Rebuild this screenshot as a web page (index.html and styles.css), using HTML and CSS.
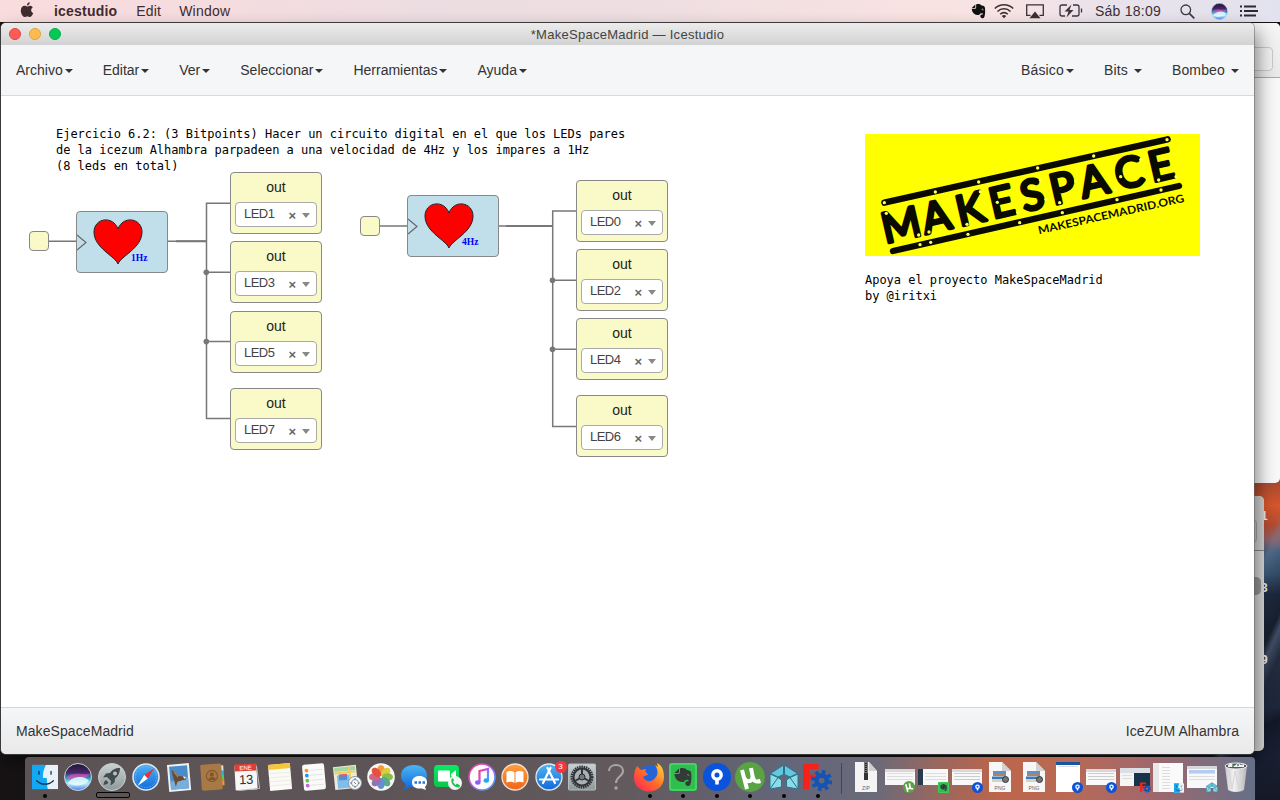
FILE: index.html
```html
<!DOCTYPE html>
<html lang="es">
<head>
<meta charset="utf-8">
<title>Icestudio</title>
<link rel="stylesheet" href="styles.css">
</head>
<body>
<svg class="defs" width="0" height="0" aria-hidden="true">
  <defs>
    <linearGradient id="gSky" x1="0" y1="0" x2="0" y2="1"><stop offset="0" stop-color="#4db5f5"/><stop offset="1" stop-color="#1269d8"/></linearGradient>
    <linearGradient id="gSilver" x1="0" y1="0" x2="0" y2="1"><stop offset="0" stop-color="#c9d2d3"/><stop offset="1" stop-color="#8e999a"/></linearGradient>
    <linearGradient id="gSiri" x1="0" y1="0" x2="0" y2="1"><stop offset="0" stop-color="#1b1638"/><stop offset=".35" stop-color="#4a2768"/><stop offset=".55" stop-color="#27a5c9"/><stop offset=".75" stop-color="#b9effc"/><stop offset="1" stop-color="#4a7af0"/></linearGradient>
    <linearGradient id="gGreen" x1="0" y1="0" x2="0" y2="1"><stop offset="0" stop-color="#0bea63"/><stop offset="1" stop-color="#0ac74b"/></linearGradient>
    <linearGradient id="gOrange" x1="0" y1="0" x2="0" y2="1"><stop offset="0" stop-color="#ffa03a"/><stop offset="1" stop-color="#f0641c"/></linearGradient>
    <linearGradient id="gNote" x1="0" y1="0" x2="1" y2="1"><stop offset="0" stop-color="#ff3a7a"/><stop offset=".5" stop-color="#b05cf0"/><stop offset="1" stop-color="#2bb8f5"/></linearGradient>
    <linearGradient id="gFox" x1="0" y1="1" x2="1" y2="0"><stop offset="0" stop-color="#ff1f60"/><stop offset=".5" stop-color="#ff6a28"/><stop offset="1" stop-color="#ffe03a"/></linearGradient>
    <linearGradient id="gBin" x1="0" y1="0" x2="1" y2="0"><stop offset="0" stop-color="#c9c9c9"/><stop offset=".4" stop-color="#f3f3f3"/><stop offset="1" stop-color="#b5b5b8"/></linearGradient>
    <symbol id="source" viewBox="0 0 28 28"><circle cx="14" cy="14" r="14" fill="#0a53dc"/><circle cx="14" cy="12" r="4.200" fill="none" stroke="#fff" stroke-width="3.400"/><path d="M14 15.500v6" stroke="#fff" stroke-width="3.600"/></symbol>
    <symbol id="torrent" viewBox="0 0 30 30"><circle cx="15" cy="15" r="15" fill="#5aa343"/><path d="M7 8l5 19M8.500 14c2 7 9 7 9 0L16 6M17.500 14c1 5 3 6.500 8 5" fill="none" stroke="#fff" stroke-width="4"/></symbol>
    <symbol id="evernote" viewBox="0 0 28 28"><rect width="28" height="28" rx="2" fill="#2fbf4f"/><rect x="1" y="1" width="26" height="26" rx="2" fill="none" stroke="#5fe07a"/><path d="M10 5.500L5.500 10H9a1 1 0 0 0 1-1z" fill="#333b36"/><path d="M11 5.500c3-1 6 0 7 1.500 3 .5 4 1 4.200 3 .4 4 .3 8-.7 11-1 3-5 2.500-5.200-.5 0-2 1.500-2.500 3-2l.2-1.500c-3-.8-4 .5-4.500 2-3 0-6-.3-7.500-2.500C6 14.500 5.500 12.500 5.500 11H9c1.500 0 2-.8 2-2z" fill="#333b36"/><path d="M18 12c1-.8 2-.3 2 .8" stroke="#2fbf4f" fill="none"/></symbol>
    <symbol id="ice" viewBox="0 0 30 26"><path d="M1 10l8 3.500 3.500 2.500V23L1 25zM29 10l-8 3.500-3.500 2.500V23L29 25z" fill="#8bdbe9" stroke="#28748b"/><path d="M14.500 1v9.500L9 13 1.500 9.500zM15.500 1v9.500l5.500 2.500 7.500-3.500z" fill="#63c8dd" stroke="#28748b"/><path d="M1 25l8-11.500M29 25l-8-11.500" stroke="#28748b" fill="none"/></symbol>
    <symbol id="freecad" viewBox="0 0 28 28"><path d="M0 1h15v5H6v5h6v5H6v9H0z" fill="#f5221b"/><circle cx="18" cy="17" r="8" fill="none" stroke="#1553b5" stroke-width="4.500" stroke-dasharray="3.200 3.080"/><circle cx="18" cy="17" r="5" fill="none" stroke="#1553b5" stroke-width="4.500"/></symbol>
    <symbol id="finder" viewBox="0 0 28 28"><path d="M0 1h28v26H0z" fill="#e9f1f8"/><path d="M0 1h15c-3 6-3.500 11-3 14h4c0 4 0 8 1 12H0z" fill="#13a8f3"/><path d="M7.500 8v3M20.500 8v3M5 18c5 5 13 5 18 0" stroke="#17304a" stroke-width="1.400" fill="none" stroke-linecap="round"/></symbol>
    <symbol id="siri" viewBox="0 0 28 28"><circle cx="14" cy="14" r="13.500" fill="url(#gSiri)" stroke="#d0d0d8"/><path d="M2 15c7-7 14-3 24-4-4 6-16 8-24 4z" fill="#f04fc0" opacity=".6"/><path d="M4 20c4-7 17-8 21-2-6 5-15 6-21 2z" fill="#e6fcff" opacity=".85"/></symbol>
    <symbol id="png" viewBox="0 0 24 30"><path d="M1 0h13l9 9v21H1z" fill="#f7f7f7"/><path d="M14 0v9h9z" fill="#d2d2d2"/><path d="M5 9h13v5H5z" fill="#5b93cd"/><path d="M5 11.500h13V14H5z" fill="#b0835a"/><path d="M4 14.500h14V20H4z" fill="#3d78b8"/><path d="M4 17h14v3H4z" fill="#d8d2c4"/><circle cx="17.500" cy="17.500" r="3" fill="#777" stroke="#333"/><text x="12" y="28" class="file-kind">PNG</text></symbol>
  </defs>
</svg>

<div class="desktop">
  <div class="wallpaper">
    <span class="shot-label shot-a">1</span><span class="shot-label shot-b">3</span><span class="shot-label shot-c">9</span>
  </div>

  <header class="menubar">
    <div class="menubar-left">
      <svg class="apple" width="14" height="16" viewBox="0 0 14 16"><path d="M9.800.2c.1 1.700-1.300 3.300-2.900 3.300C6.700 1.900 8.200.3 9.800.2zM7 4.500c.7 0 1.700-.8 3-.8 1.200 0 2.200.6 2.800 1.500-2.400 1.500-2 4.900.5 5.900-.5 1.500-1.900 4-3.300 4-1 0-1.500-.6-2.700-.6s-1.700.6-2.600.6C2.900 15.200.8 11.800.8 8.600c0-3.100 1.900-4.800 3.700-4.800 1.100 0 1.900.7 2.500.7z" fill="#402c2f"/></svg>
      <strong class="m-app">icestudio</strong><span class="m-edit">Edit</span><span class="m-window">Window</span>
    </div>
    <div class="menubar-right">
      <svg width="15" height="17" viewBox="4.500 4.500 19 20"><path d="M10 5.500L5.500 10H9a1 1 0 0 0 1-1z" fill="#111"/><path d="M11 5.500c3-1 6 0 7 1.500 3 .5 4 1 4.200 3 .4 4 .3 8-.7 11-1 3-5 2.500-5.200-.5 0-2 1.500-2.500 3-2l.2-1.500c-3-.8-4 .5-4.500 2-3 0-6-.3-7.500-2.500C6 14.500 5.500 12.500 5.500 11H9c1.500 0 2-.8 2-2z" fill="#111"/><path d="M18 12c1-.8 2-.3 2 .8" stroke="#eee" fill="none"/></svg>
      <svg width="20" height="16" viewBox="0 0 20 16"><g fill="none" stroke="#3d2f33" stroke-width="1.600"><path d="M.8 5.500c5-5 13.400-5 18.400 0M3.500 8.500c3.600-3.600 9.400-3.600 13 0M6.200 11.300c2.200-2.200 5.400-2.200 7.600 0"/></g><path d="M7.800 13c1.300-1.300 3.100-1.300 4.400 0L10 15.300z" fill="#3d2f33"/></svg>
      <svg width="18" height="15" viewBox="0 0 18 15"><path d="M4.500 11.300H.7V.8h16.600v10.500h-3.800" fill="none" stroke="#3d2f33" stroke-width="1.300"/><path d="M9 7.500l5.500 6.800h-11z" fill="#3d2f33"/></svg>
      <svg width="24" height="14" viewBox="0 0 24 14"><path d="M8 1H3a2 2 0 0 0-2 2v7a2 2 0 0 0 2 2h3M14 1h4a2 2 0 0 1 2 2v7a2 2 0 0 1-2 2h-5M22.500 4.500v4" fill="none" stroke="#3d3338" stroke-width="1.300"/><path d="M12.500.5L5.500 7.500h4l-2 6 7-7.500h-4z" fill="#3d3338"/></svg>
      <span class="clock">Sáb 18:09</span>
      <svg width="15" height="15" viewBox="0 0 15 15"><circle cx="5.800" cy="5.800" r="4.800" fill="none" stroke="#3c383f" stroke-width="1.300"/><path d="M9.300 9.300l5 5" stroke="#3c383f" stroke-width="1.700"/></svg>
      <svg width="17" height="17"><use href="#siri"/></svg>
      <svg width="18" height="12" viewBox="0 0 18 12"><path d="M0 1.500h2M0 6h2M0 10.500h2M4 1.500h12M4 6h14M4 10.500h12" stroke="#2b2a33" stroke-width="1.800"/></svg>
    </div>
  </header>

  <div class="back-window back-one"><div class="back-toolbar"><div class="back-field"></div></div></div>
  <div class="back-window back-two"><div class="back-toolbar"><div class="back-field"></div></div><div class="back-thumb"></div></div>

  <main class="window">
    <div class="titlebar">
      <div class="lights"><i class="light close"></i><i class="light mini"></i><i class="light zoom"></i></div>
      <span class="window-title">*MakeSpaceMadrid — Icestudio</span>
    </div>
    <nav class="nav">
      <div class="nav-group"><a>Archivo<i class="caret"></i></a><a>Editar<i class="caret"></i></a><a>Ver<i class="caret"></i></a><a>Seleccionar<i class="caret"></i></a><a>Herramientas<i class="caret"></i></a><a>Ayuda<i class="caret"></i></a></div>
      <div class="nav-group nav-right"><a>Básico<i class="caret"></i></a><a>Bits&nbsp;<i class="caret"></i></a><a>Bombeo&nbsp;<i class="caret"></i></a></div>
    </nav>

    <section class="canvas">
      <svg class="wires" width="1253" height="611" viewBox="1 96 1253 611">
        <g fill="none" stroke="#777" stroke-width="1.500">
          <path d="M49 241.200h27M168 241.200h38M380 226h27M499 226h53.500"/>
          <path d="M230 203.200h-23.500v215.300H230M206 272.300h24M206 341.600h24"/>
          <path d="M576 211h-23.300v215.500H576M552.500 280.200h23.500M552.500 349.300h23.500"/>
          <path d="M176 241.200h30M506 226h46.500" stroke-width="2"/>
        </g>
        <g fill="#777"><circle cx="206.300" cy="272.300" r="2.800"/><circle cx="206.300" cy="341.600" r="2.800"/><circle cx="552.500" cy="280.200" r="2.800"/><circle cx="552.500" cy="349.300" r="2.800"/></g>
      </svg>

      <pre class="note note-task">Ejercicio 6.2: (3 Bitpoints) Hacer un circuito digital en el que los LEDs pares
de la icezum Alhambra parpadeen a una velocidad de 4Hz y los impares a 1Hz
(8 leds en total)</pre>

      <div class="pin pin-1"></div>
      <div class="pin pin-2"></div>
      <div class="code code-1">
        <svg width="90" height="60" viewBox="0 0 90 60"><path d="M0 23l9 7.500L0 38" fill="none" stroke="#666" stroke-width="1.200"/><path d="M41 52C38 44 17 36 17 20 17 6 36 3 41 17 46 3 65 6 65 20 65 36 44 44 41 52z" fill="#f00" stroke="#222"/><text x="54" y="49" class="hz">1Hz</text></svg>
      </div>
      <div class="code code-2">
        <svg width="90" height="60" viewBox="0 0 90 60"><path d="M0 23l9 7.500L0 38" fill="none" stroke="#666" stroke-width="1.200"/><path d="M41 52C38 44 17 36 17 20 17 6 36 3 41 17 46 3 65 6 65 20 65 36 44 44 41 52z" fill="#f00" stroke="#222"/><text x="54" y="49" class="hz">4Hz</text></svg>
      </div>

      <div class="out col-a r1"><span>out</span><div class="select"><b>LED1</b><em>×</em><i></i></div></div>
      <div class="out col-a r2"><span>out</span><div class="select"><b>LED3</b><em>×</em><i></i></div></div>
      <div class="out col-a r3"><span>out</span><div class="select"><b>LED5</b><em>×</em><i></i></div></div>
      <div class="out col-a r4"><span>out</span><div class="select"><b>LED7</b><em>×</em><i></i></div></div>
      <div class="out col-b s1"><span>out</span><div class="select"><b>LED0</b><em>×</em><i></i></div></div>
      <div class="out col-b s2"><span>out</span><div class="select"><b>LED2</b><em>×</em><i></i></div></div>
      <div class="out col-b s3"><span>out</span><div class="select"><b>LED4</b><em>×</em><i></i></div></div>
      <div class="out col-b s4"><span>out</span><div class="select"><b>LED6</b><em>×</em><i></i></div></div>

      <div class="sponsor">
        <svg width="335" height="122" viewBox="30 27 1005 366">
          <rect x="30" y="27" width="1005" height="366" fill="#ff0"/>
          <path d="M88 233L938 43M114 378L972 183" stroke="#0a0a00" stroke-width="19" stroke-linecap="round"/>
          <text class="logo-main" transform="translate(106 352) rotate(-12.900)" x="-16 108 214 316 412 502 594 702 806">MAKESPACE</text>
          <text class="logo-url" transform="translate(552 328) rotate(-12.600)" textLength="448" lengthAdjust="spacingAndGlyphs">MAKESPACEMADRID.ORG</text>
          <g fill="#ffff50"><circle cx="88" cy="233" r="5"/><circle cx="241" cy="201" r="5"/><circle cx="371" cy="171" r="5"/><circle cx="548" cy="129" r="5"/><circle cx="716" cy="93" r="5"/><circle cx="936" cy="44" r="5"/><circle cx="195" cy="359" r="5"/><circle cx="227" cy="352" r="5"/><circle cx="339" cy="328" r="5"/><circle cx="494" cy="293" r="5"/><circle cx="622" cy="263" r="5"/><circle cx="786" cy="224" r="5"/><circle cx="918" cy="195" r="5"/><circle cx="94" cy="265" r="5"/><circle cx="191" cy="330" r="5"/><circle cx="222" cy="321" r="5"/><circle cx="336" cy="298" r="5"/><circle cx="376" cy="200" r="5"/><circle cx="427" cy="232" r="5"/><circle cx="488" cy="262" r="5"/><circle cx="556" cy="165" r="5"/><circle cx="573" cy="223" r="5"/><circle cx="614" cy="233" r="5"/><circle cx="662" cy="168" r="5"/><circle cx="780" cy="195" r="5"/><circle cx="797" cy="155" r="5"/><circle cx="858" cy="103" r="5"/><circle cx="911" cy="165" r="5"/><circle cx="963" cy="155" r="5"/></g>
        </svg>
        <pre class="note">Apoya el proyecto MakeSpaceMadrid
by @iritxi</pre>
      </div>
    </section>

    <footer class="status"><span>MakeSpaceMadrid</span><span>IceZUM Alhambra</span></footer>
  </main>

  <div class="dock">
    <div class="dock-apps">
      <div class="app running"><svg width="26" height="28"><use href="#finder"/></svg></div>
      <div class="app"><svg width="28" height="28"><use href="#siri"/></svg></div>
      <div class="app launching"><svg width="28" height="28" viewBox="0 0 28 28"><circle cx="14" cy="14" r="13.500" fill="url(#gSilver)" stroke="#c8d0d0"/><path d="M22 5c-5 0-8 2-10 5l-4 .5-3 4 4-.5 4 4-.5 4.500 4-3 .5-4c3-2 5-6 5-10.500zM8 17c-2 1-2 3-2.500 5C8 21.500 9.500 21 10.500 19.500z" fill="#424b50"/><circle cx="17" cy="10.500" r="2" fill="#b8c2c4"/></svg></div>
      <div class="app"><svg width="28" height="28" viewBox="0 0 28 28"><circle cx="14" cy="14" r="13" fill="url(#gSky)" stroke="#dfe5ea" stroke-width="1.600"/><circle cx="14" cy="14" r="10.500" fill="none" stroke="#7fc7f5" stroke-width="1" stroke-dasharray=".6 1"/><path d="M22.500 5L12.300 12l3.500 3.500z" fill="#f23030"/><path d="M5.500 23l6.800-11 3.500 3.500z" fill="#fff"/></svg></div>
      <div class="app"><svg width="28" height="30" viewBox="0 0 28 30"><g transform="rotate(-5 14 15)"><path d="M3 2h22v27H3z" fill="#eef1f2"/><path d="M5 4h18v23H5z" fill="#4a8bc9"/><path d="M5 19l18-3v11H5z" fill="#78aeda"/><path d="M7 7c3 2 4 4 6 7l6 1 2 3-4 .5-5 1-2 5-1-6-1-5z" fill="#6d4a2b"/><path d="M18 14.500l3 1-2 2z" fill="#f5efe0"/><path d="M9 9l4 6" stroke="#b08a5a"/></g></svg></div>
      <div class="app"><svg width="28" height="30" viewBox="0 0 28 30"><g transform="rotate(-4 14 15)"><path d="M21 4h4v6h-4z" fill="#ddd"/><path d="M21 9h4v6h-4z" fill="#30b6d8"/><path d="M21 14h4v5h-4z" fill="#65c443"/><path d="M21 19h4v5h-4z" fill="#f39a2b"/><rect x="2" y="2" width="21" height="26" rx="1.500" fill="#a87845"/><circle cx="13" cy="14" r="5.500" fill="none" stroke="#7e562c"/><circle cx="13" cy="12.500" r="2" fill="#7e562c"/><path d="M9 18c1-4 7-4 8 0z" fill="#7e562c"/></g></svg></div>
      <div class="app"><svg width="28" height="28" viewBox="0 0 28 28"><g transform="rotate(-3 14 14)"><rect x="3" y="2" width="22" height="25" rx="1" fill="#f7f7f7"/><path d="M3 1h22v7H3z" fill="#dd3f38"/><text x="14" y="7" class="cal-month">ENE</text><text x="14" y="21" class="cal-day">13</text><path d="M25 4l2 22-21 1" stroke="#bdbdbd" fill="none"/></g></svg></div>
      <div class="app"><svg width="28" height="30" viewBox="0 0 28 30"><g transform="rotate(-5 14 15)"><path d="M3 2h22v26H3z" fill="#fbfaf5"/><path d="M3 2h22v5H3z" fill="#f7c53a"/><path d="M3 11h22M3 15h22M3 19h22M3 23h22" stroke="#eeece6"/></g></svg></div>
      <div class="app"><svg width="28" height="30" viewBox="0 0 28 30"><g transform="rotate(-5 14 15)"><rect x="3" y="2" width="22" height="26" rx="2" fill="#fafafa"/><g stroke="#e4e4e4"><path d="M10 8h13M10 13h13M10 18h13M10 23h13"/></g><circle cx="7" cy="8" r="1.900" fill="#fb9329"/><circle cx="7" cy="13" r="1.900" fill="#2294ee"/><circle cx="7" cy="18" r="1.900" fill="#5ccd38"/><circle cx="7" cy="23" r="1.900" fill="#c764e0"/></g></svg></div>
      <div class="app"><svg width="30" height="28" viewBox="0 0 30 28"><g transform="rotate(-6 13 14)"><path d="M2 3h23v23H2z" fill="#e9ecd9"/><path d="M3 4h21v4H3z" fill="#a5d6a2"/><path d="M5 12h12v13H5z" fill="#7fbdec"/><path d="M7 11h8v6H7z" fill="#4f8fd4"/><path d="M7 11h8v2H7z" fill="#e7615b"/><path d="M18 4v21M3 9.500h21" stroke="#f3cd5c" stroke-width="2"/></g><circle cx="23" cy="20" r="6.500" fill="#fafafa" stroke="#8799a4"/><circle cx="23" cy="20" r="3.500" fill="none" stroke="#87919c"/><path d="M23 15v2M23 23v2M18 20h2M26 20h2M22 19l2 2" stroke="#6c8292"/></svg></div>
      <div class="app"><svg width="28" height="28" viewBox="-14 -14 28 28"><circle r="13.800" fill="#f6f6f3"/><g opacity=".92"><ellipse cy="-6.500" rx="3.800" ry="5.500" fill="#f7932a"/><ellipse cy="-6.500" rx="3.800" ry="5.500" fill="#dcc92c" transform="rotate(45)"/><ellipse cy="-6.500" rx="3.800" ry="5.500" fill="#82b93c" transform="rotate(90)"/><ellipse cy="-6.500" rx="3.800" ry="5.500" fill="#4ba780" transform="rotate(135)"/><ellipse cy="-6.500" rx="3.800" ry="5.500" fill="#5a88c8" transform="rotate(180)"/><ellipse cy="-6.500" rx="3.800" ry="5.500" fill="#8768b4" transform="rotate(225)"/><ellipse cy="-6.500" rx="3.800" ry="5.500" fill="#c95a7a" transform="rotate(270)"/><ellipse cy="-6.500" rx="3.800" ry="5.500" fill="#e54332" transform="rotate(315)"/></g></svg></div>
      <div class="app"><svg width="28" height="28" viewBox="0 0 28 28"><path d="M14 2c8 0 13 4 13 11s-6 11-13 11c-2 0-3 0-4-.5C8 25.500 6 26 3 26c2-1.500 2.500-3 2.500-5C2.500 19 1 16 1 13 1 6 6 2 14 2z" fill="url(#gSky)"/><path d="M19 13c5 0 8 2.500 8 6s-1.500 4-2 5l1 3-4-1.500c-7 .5-10-2-10-6s3-6.500 7-6.500z" fill="#fff"/><path d="M14.500 19.500h2.500M18.500 19.500H21M22.500 19.500H25" stroke="#2675d8" stroke-width="2.300"/></svg></div>
      <div class="app"><svg width="28" height="28" viewBox="0 0 28 28"><rect y="2" width="25" height="22" rx="4" fill="url(#gGreen)"/><rect x="4" y="7.500" width="12" height="11" rx="1" fill="#fff"/><path d="M17 11l5-4v10l-5-4z" fill="#fff"/><circle cx="21" cy="20" r="7" fill="#f5f7f5"/><path d="M17.500 16c-1 5 3 9 8 8.500l.5-2-3-2-1.500 1.500-2.500-3 1-1.500-1-2.500z" fill="#1bc553"/></svg></div>
      <div class="app"><svg width="28" height="28" viewBox="0 0 28 28"><circle cx="14" cy="14" r="13" fill="#fdfdfd" stroke="url(#gNote)" stroke-width="1.600"/><path d="M11.500 19V8l8.500-2v11" fill="none" stroke="url(#gNote)" stroke-width="2.200"/><ellipse cx="9.800" cy="19.500" rx="2.700" ry="2.200" fill="#8f5cf2"/><ellipse cx="18.300" cy="17.500" rx="2.700" ry="2.200" fill="#22a8f2"/></svg></div>
      <div class="app"><svg width="28" height="28" viewBox="0 0 28 28"><circle cx="14" cy="14" r="13" fill="url(#gOrange)" stroke="#f3e3d5" stroke-width="1.300"/><path d="M5.500 9c3-1.500 6-1.500 8 .5v10.500c-2-1.500-5-1.500-8-.5zM22.500 9c-3-1.500-6-1.500-8 .5v10.500c2-1.500 5-1.500 8-.5z" fill="#fff"/></svg></div>
      <div class="app"><svg width="28" height="28" viewBox="0 0 28 28"><circle cx="14" cy="14" r="13" fill="url(#gSky)" stroke="#e0e8f0" stroke-width="1.300"/><path d="M15.500 5L8 20M12.500 5L20 20M5 16.500h18" fill="none" stroke="#fff" stroke-width="2.200" stroke-linecap="round"/></svg><span class="badge">3</span></div>
      <div class="app"><svg width="28" height="28" viewBox="0 0 28 28"><rect x=".5" y="1" width="27" height="26" rx="1" fill="url(#gSilver)" stroke="#b5bdc2"/><circle cx="14" cy="14" r="10" fill="none" stroke="#33373b" stroke-width="3" stroke-dasharray="1.500 .7"/><circle cx="14" cy="14" r="8.500" fill="#abb0b3" stroke="#313438" stroke-width="2"/><path d="M14 14V6M14 14l7 4M14 14l-7 4" stroke="#303438" stroke-width="2"/><circle cx="14" cy="14" r="3" fill="#777" stroke="#292c30"/></svg></div>
      <div class="app"><svg width="20" height="28" viewBox="0 0 20 28"><path d="M3 8c0-8 14-8 14 0 0 6-7 5-7 12" fill="none" stroke="#aaa6a7" stroke-width="2"/><circle cx="10" cy="25" r="1.700" fill="#aaa6a7"/></svg></div>
      <div class="app running"><svg width="30" height="30" viewBox="0 0 30 30"><circle cx="16" cy="13.500" r="10.500" fill="#2464d8"/><path d="M3 4l4 4 5-1c-1 2-1 3 2 5-1 2-5 2-5 3 2 5 9 6 13 0 3-4 1-9-1-12l3 2-1-4c5 2 7 8 7 14 0 9-7 14.500-15 14.500S0 24 0 16C0 11 1 7 3 4z" fill="url(#gFox)"/></svg></div>
      <div class="app running"><svg width="28" height="28"><use href="#evernote"/></svg></div>
      <div class="app running"><svg width="28" height="28"><use href="#source"/></svg></div>
      <div class="app running"><svg width="30" height="30"><use href="#torrent"/></svg></div>
      <div class="app running"><svg width="30" height="26"><use href="#ice"/></svg></div>
      <div class="app running"><svg width="29" height="29"><use href="#freecad"/></svg></div>
    </div>
    <div class="dock-rule"></div>
    <div class="dock-files">
      <div class="app"><svg width="24" height="30" viewBox="0 0 24 30"><path d="M1 0h14l8 9v21H1z" fill="#f4f4f4"/><path d="M15 0v9h8z" fill="#d0d0d0"/><path d="M10 0h4v17h-4z" fill="#777"/><path d="M12 1v14" stroke="#222" stroke-width="2" stroke-dasharray="1 1"/><path d="M10 11h4v7h-4z" fill="#333"/><text x="12" y="28" class="file-kind">ZIP</text></svg></div>
      <div class="app"><div class="mini-win"><p></p></div><svg class="corner" width="12" height="12"><use href="#torrent"/></svg></div>
      <div class="app"><div class="mini-win sidebar"><p></p></div><svg class="corner" width="11" height="11"><use href="#evernote"/></svg></div>
      <div class="app"><div class="mini-win lines"><p></p></div><svg class="corner" width="11" height="11"><use href="#source"/></svg></div>
      <div class="app"><svg width="24" height="30"><use href="#png"/></svg></div>
      <div class="app"><svg width="24" height="30"><use href="#png"/></svg></div>
      <div class="app"><div class="mini-win tall"><p></p></div><svg class="corner" width="11" height="11"><use href="#source"/></svg></div>
      <div class="app"><div class="mini-win lines"><p></p></div><svg class="corner" width="11" height="11"><use href="#source"/></svg></div>
      <div class="app"><div class="mini-win cad"><p></p></div><svg class="corner" width="11" height="11"><use href="#freecad"/></svg></div>
      <div class="app"><div class="mini-win list"><p></p></div><svg class="corner" width="10" height="10"><use href="#finder"/></svg></div>
      <div class="app"><div class="mini-win sketch"><p></p></div><svg class="corner" width="12" height="11"><use href="#ice"/></svg></div>
      <div class="app"><svg width="24" height="30" viewBox="0 0 24 30"><path d="M1 4h22l-3 24c-4 2.500-12 2.500-16 0z" fill="url(#gBin)"/><path d="M5 8l3 19 3-18 4 18 4-19" stroke="#d6d6d6" fill="none"/><ellipse cx="12" cy="4" rx="11" ry="3" fill="#555" stroke="#eee"/><path d="M4 3l3-2 3 3 4-3 3 2 3-1v3H4z" fill="#f2f2f2"/><path d="M8 4h2M13 3h2" stroke="#348c67" stroke-width="1.500"/></svg></div>
    </div>
  </div>
</div>
</body>
</html>
```
FILE: styles.css
```css
* { box-sizing: border-box; }
body { margin: 0; font-family: "Liberation Sans", Arial, sans-serif; font-size: 14px; color: #333; }
svg { display: block; flex: none; }
.defs { position: absolute; }
.desktop { position: relative; width: 1280px; height: 800px; overflow: hidden; background: #171315; }

.wallpaper {
  position: absolute; right: 0; top: 470px; width: 90px; height: 330px;
  background:
    linear-gradient(115deg, transparent 45%, rgba(110,135,165,.35) 48%, transparent 53%, rgba(0,0,0,.3) 64%, rgba(130,150,180,.3) 67%, transparent 72%),
    linear-gradient(160deg, transparent 74%, rgba(12,15,28,.6) 78%, transparent 88%),
    linear-gradient(#8f4433 0, #d5562c 35px, #b44b30 55px, #8b6067 70px, #435e7d 82px, #36506c 105px, #202e44 125px, #222b3e 200px, #1b2438 260px, #151927 330px);
}
.shot-label { position: absolute; left: 71px; font-size: 12px; font-weight: bold; color: #e9e9e9; }
.shot-a { top: 39px; }
.shot-b { top: 111px; }
.shot-c { top: 183px; }

.menubar {
  position: relative; display: flex; justify-content: space-between; align-items: center;
  height: 22px; padding: 0 22px 0 20px; font-size: 14px; color: #402c2f;
  background: linear-gradient(90deg, #f9dcdd 0, #f5dcdf 220px, #ecdde2 430px, #eedee1 640px, #f8e2e2 900px, #f8e4e4 1000px, #eae2ea 1100px, #e2e2ef 1280px);
}
.menubar-left, .menubar-right { display: flex; align-items: center; height: 22px; }
.m-app { margin: 0 19px 0 20px; letter-spacing: .2px; }
.m-edit { margin-right: 18px; letter-spacing: .2px; }
.m-window { letter-spacing: .2px; }
.apple { margin-top: -2px; }
.menubar-right svg:nth-of-type(1) { margin-right: 8px; }
.menubar-right svg:nth-of-type(2) { margin-right: 12px; }
.menubar-right svg:nth-of-type(3) { margin-right: 15px; }
.menubar-right svg:nth-of-type(4) { margin-right: 12px; }
.menubar-right svg:nth-of-type(5) { margin-right: 16px; }
.menubar-right svg:nth-of-type(6) { margin-right: 12px; }
.clock { width: 67px; margin-right: 18px; letter-spacing: .25px; color: #3b3035; white-space: nowrap; }

.back-window { position: absolute; background: #f8f8f8; overflow: hidden; }
.back-one { left: 1000px; top: 23px; width: 280px; height: 460px; border-radius: 5px; }
.back-one .back-toolbar { display: flex; align-items: center; justify-content: flex-end; height: 55px; padding: 17px 7px 0 0; background: linear-gradient(#f5f5f5, #e9e9e9); border-bottom: 1px solid #aaa; }
.back-field { width: 60px; height: 24px; border: 1px solid #c8c8c8; border-radius: 4px; background: #f0f0f0; }
.back-two { left: 1000px; top: 496px; width: 264px; height: 255px; border-radius: 5px; background: #dcdcdc; }
.back-two .back-toolbar { display: flex; align-items: center; justify-content: flex-end; height: 55px; padding: 16px 7px 0 0; background: #d4d4d4; border-bottom: 1px solid #888; }
.back-two .back-field { background: #ccc; border-color: #aaa; }
.back-thumb { width: 12px; height: 18px; margin: 26px 3px 0 auto; border-radius: 5px; background: #999; }

.window {
  position: absolute; left: 1px; top: 23px; width: 1253px; height: 731px; overflow: visible;
  display: flex; flex-direction: column; background: #fff; border-radius: 5px;
  box-shadow: 0 0 0 1px rgba(100,100,100,.5), 4px 8px 18px rgba(0,0,0,.45);
}
.titlebar { position: relative; display: flex; align-items: center; justify-content: center; height: 22px; background: linear-gradient(#ececec, #d2d2d2); border-radius: 5px 5px 0 0; }
.lights { position: absolute; left: 8px; top: 5px; display: flex; gap: 8px; }
.light { width: 12px; height: 12px; border-radius: 50%; border: 1px solid; }
.close { background: #fc5b57; border-color: #e2463f; }
.mini { background: #fdbb4f; border-color: #e1a13a; }
.zoom { background: #05c857; border-color: #07ad4a; }
.window-title { font-size: 13px; color: #444; letter-spacing: .28px; }
.nav { display: flex; justify-content: space-between; height: 51px; padding: 0 15px; background: #f5f6f8; border-bottom: 1px solid #d8dade; }
.nav-group { display: flex; gap: 30px; }
.nav-right { letter-spacing: .15px; }
.nav a { display: flex; align-items: center; color: #333; white-space: nowrap; }
.caret { width: 8px; margin: 2px 0 0 2px; border: 4px solid transparent; border-top-color: #333; border-bottom: 0; }
.canvas { position: relative; height: 611px; background: #fff; }
.status { display: flex; justify-content: space-between; align-items: center; height: 47px; padding: 0 15px; letter-spacing: .08px; background: linear-gradient(#f5f6f8, #e9e9ea); border-top: 1px solid #d4d6d8; border-radius: 0 0 5px 5px; }

.wires { position: absolute; inset: 0; }
.note { margin: 0; font: 12px/16px "DejaVu Sans Mono", monospace; letter-spacing: -.02px; color: #000; }
.note-task { position: absolute; left: 55px; top: 30px; }
.pin, .code, .out { position: absolute; border: 1.500px solid #888; border-radius: 4px; }
.pin { width: 20px; height: 20px; background: #fafac8; }
.pin-1 { left: 28px; top: 135px; }
.pin-2 { left: 359px; top: 120px; }
.code { width: 92px; height: 62px; background: #c1dfea; }
.code-1 { left: 75px; top: 115px; }
.code-2 { left: 406px; top: 99px; }
.hz { font: bold 9.500px "Liberation Serif", serif; fill: #00f; }
.out { width: 92px; height: 62px; padding: 6px 4px 0; display: flex; flex-direction: column; align-items: stretch; text-align: center; background: #fafac8; color: #222; }
.out span { height: 16px; line-height: 16px; }
.col-a { left: 229px; }
.col-b { left: 575px; }
.r1 { top: 76px; }
.r2 { top: 145px; }
.r3 { top: 215px; }
.r4 { top: 292px; }
.s1 { top: 84px; }
.s2 { top: 153px; }
.s3 { top: 222px; }
.s4 { top: 299px; }
.select { display: flex; align-items: center; height: 25px; margin-top: 7px; padding: 0 6px 0 8px; border: 1px solid #aaa; border-radius: 4px; background: #fff; }
.select b { font-weight: normal; font-size: 13px; letter-spacing: -.55px; color: #444; margin: -3px auto 0 0; }
.select em { font: bold 13px "Liberation Sans", sans-serif; color: #666; margin: 2px 6px 0 0; }
.select i { border: 4px solid transparent; border-top: 5px solid #888; border-bottom: 0; margin-top: 2px; }
.sponsor { position: absolute; left: 864px; top: 38px; display: flex; flex-direction: column; gap: 16px; }
.logo-main { font: 400 126px Lato, sans-serif; fill: #0a0a00; stroke: #0a0a00; stroke-width: 10px; stroke-linejoin: round; }
.logo-url { font: bold 33px Lato, sans-serif; fill: #0a0a00; }

.dock {
  position: absolute; left: 25px; top: 757px; width: 1230px; height: 43px; display: flex;
  padding-left: 3px; border-radius: 4px 4px 0 0;
  background: linear-gradient(90deg, #5b5354 0, #5c5456 350px, #625a5d 600px, #636679 760px, #6a6a79 850px, #98675f 910px, #bc654b 975px, #b96a54 1040px, #a3676a 1120px, #7c6d7e 1190px, #656f88 1230px);
}
.dock-apps, .dock-files { display: grid; grid-auto-flow: column; grid-auto-columns: 33.600px; height: 40px; }
.dock-rule { width: 1px; height: 31px; margin: 6px 7px 0 7px; background: #444650; }
.app { position: relative; display: flex; align-items: center; justify-content: center; }
.running::after { content: ""; position: absolute; bottom: -1px; left: 15px; width: 4px; height: 4px; border-radius: 50%; background: #050505; }
.launching::after { content: ""; position: absolute; bottom: -1px; left: 1px; width: 32px; height: 4px; border: 1px solid #050505; border-radius: 2px; }
.badge { position: absolute; right: -1px; top: 4px; width: 12px; height: 12px; border-radius: 50%; background: #f5373b; color: #fff; font-size: 8px; line-height: 12px; text-align: center; }
.cal-month { font: 6px "Liberation Sans", sans-serif; fill: #fff; text-anchor: middle; }
.cal-day { font: 13px "Liberation Sans", sans-serif; fill: #333; text-anchor: middle; }
.file-kind { font: 5px "Liberation Sans", sans-serif; fill: #666; text-anchor: middle; }
.corner { position: absolute; right: 1px; bottom: 4px; }
.mini-win { width: 30px; height: 16px; padding: 4px 2px; background: linear-gradient(#d8d8da 3px, #f8f8f8 3px); }
.mini-win p { margin: 0; height: 7px; background: repeating-linear-gradient(#ddd 0 1px, transparent 1px 3px); }
.sidebar { background: linear-gradient(90deg, #263b4d 5px, #f8f8f8 5px); padding-left: 7px; }
.lines p { background: repeating-linear-gradient(#ccc 0 1px, transparent 1px 3px); }
.cad { height: 18px; background: linear-gradient(#dae0e6 5px, transparent 5px), linear-gradient(90deg, #f5f5f5 14px, #18344d 14px); }
.cad p { width: 10px; }
.tall { width: 24px; height: 30px; background: linear-gradient(#17559e 3px, #fff 3px); }
.tall p { height: 1px; }
.list { height: 29px; background: linear-gradient(90deg, #e8e8ea 6px, #fafafa 6px); padding-left: 9px; }
.list p { width: 8px; height: 22px; }
.sketch { height: 22px; }
.sketch p { height: 12px; border-top: 3px solid #b2cdf0; }
```
